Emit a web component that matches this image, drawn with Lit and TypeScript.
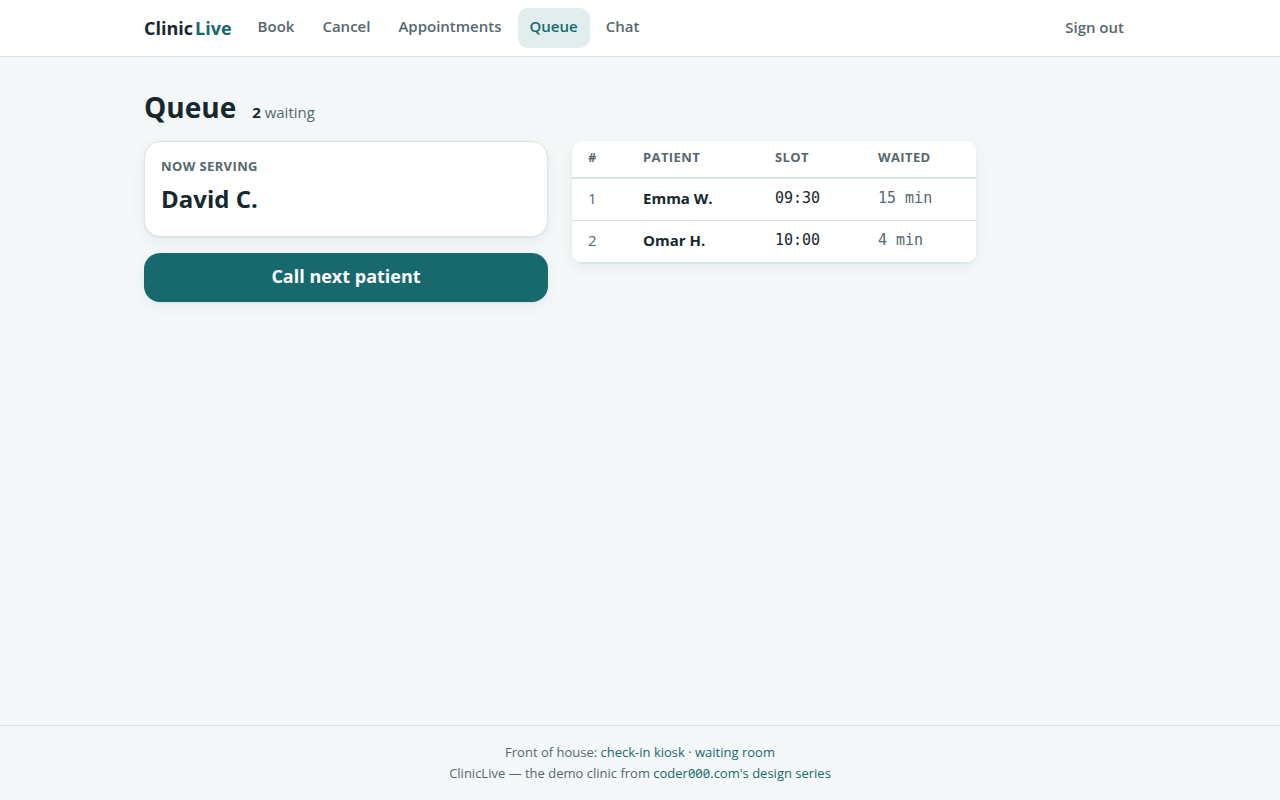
import { LitElement, html, css } from "lit";
import { customElement, property, state } from "lit/decorators.js";
import { classMap } from "lit/directives/class-map.js";

interface Waiting {
  name: string;
  slot: string;
  waited: number;
}

@customElement("clinic-header")
class ClinicHeader extends LitElement {
  @property() current = "";

  static styles = css`
    :host {
      display: block;
      background: #ffffff;
      border-bottom: 1px solid #d8e3e3;
    }
    .bar {
      box-sizing: border-box;
      max-width: 1024px;
      min-height: 56px;
      margin: 0 auto;
      padding: 0 16px;
      display: flex;
      align-items: center;
      gap: 14px;
    }
    .brand {
      display: flex;
      gap: 2px;
      color: #16282d;
      font-size: 18px;
      font-weight: 700;
      line-height: 24px;
      text-decoration: none;
    }
    .accent {
      color: #17696e;
    }
    .links {
      flex: 1;
      display: flex;
      gap: 4px;
    }
    .link,
    .signout {
      box-sizing: border-box;
      border: 0;
      border-radius: 10px;
      background: none;
      color: #56686d;
      font-family: inherit;
      font-size: 15px;
      font-weight: 600;
      line-height: 24px;
      text-decoration: none;
      padding: 6px 12px 10px;
      cursor: pointer;
    }
    .signout {
      padding: 7px 12px 9px;
    }
    .active {
      background: #e1eeed;
      color: #17696e;
    }
  `;

  render() {
    const links = ["Book", "Cancel", "Appointments", "Queue", "Chat"];
    return html`
      <header class="bar">
        <a class="brand" href="#home"><span>Clinic</span><span class="accent">Live</span></a>
        <nav class="links">
          ${links.map(
            (l) => html`<a
              class=${classMap({ link: true, active: l === this.current })}
              href="#${l.toLowerCase()}"
              >${l}</a
            >`
          )}
        </nav>
        <button class="signout" type="button">Sign out</button>
      </header>
    `;
  }
}

@customElement("queue-table")
class QueueTable extends LitElement {
  @property({ attribute: false }) rows: Waiting[] = [];

  static styles = css`
    :host {
      display: block;
    }
    .table {
      width: 100%;
      table-layout: fixed;
      border-collapse: separate;
      border-spacing: 0;
      background: #ffffff;
      border-radius: 10px;
      overflow: hidden;
      box-shadow: 0 1px 2px rgba(22, 40, 45, 0.06), 0 4px 16px rgba(22, 40, 45, 0.06);
    }
    .head {
      padding: 6px 16px 10px;
      border-bottom: 2px solid #d8e5e3;
      color: #56686d;
      font-size: 13px;
      font-weight: 700;
      line-height: 20px;
      letter-spacing: 0.03em;
      text-align: left;
      text-transform: uppercase;
    }
    .num {
      width: 23px;
    }
    .patient {
      width: 100px;
    }
    .slot {
      width: 71px;
    }
    .cell {
      padding: 7px 16px 10px;
      border-bottom: 1px solid #d8e5e3;
      font-size: 15px;
      line-height: 24px;
      vertical-align: top;
    }
    .name {
      font-weight: 700;
    }
    .muted {
      color: #56686d;
    }
    .time {
      font-family: "DejaVu Sans Mono", monospace;
    }
  `;

  render() {
    return html`
      <table class="table">
        <thead>
          <tr>
            <th class="head num" scope="col">#</th>
            <th class="head patient" scope="col">Patient</th>
            <th class="head slot" scope="col">Slot</th>
            <th class="head" scope="col">Waited</th>
          </tr>
        </thead>
        <tbody>
          ${this.rows.map(
            (r, i) => html`<tr>
              <td class="cell muted">${i + 1}</td>
              <td class="cell name">${r.name}</td>
              <td class="cell time">${r.slot}</td>
              <td class="cell time muted">${r.waited} min</td>
            </tr>`
          )}
        </tbody>
      </table>
    `;
  }
}

@customElement("clinic-footer")
class ClinicFooter extends LitElement {
  static styles = css`
    :host {
      display: block;
      border-top: 1px solid #d8e3e3;
      color: #56686d;
      font-size: 13px;
      line-height: 21px;
      text-align: center;
    }
    .footer {
      padding: 16px;
    }
    .line {
      margin: 0;
    }
    .link {
      color: #17696e;
      text-decoration: none;
    }
    .zeros {
      font-variant-numeric: slashed-zero;
    }
  `;

  render() {
    return html`
      <footer class="footer">
        <p class="line">
          Front of house: <a class="link" href="#kiosk">check-in kiosk</a> ·
          <a class="link" href="#waiting-room">waiting room</a>
        </p>
        <p class="line">
          ClinicLive — the demo clinic from
          <a class="link zeros" href="#series">coder000.com's design series</a>
        </p>
      </footer>
    `;
  }
}

@customElement("app-root")
class AppRoot extends LitElement {
  @state() private serving = "David C.";
  @state() private queue: Waiting[] = [
    { name: "Emma W.", slot: "09:30", waited: 15 },
    { name: "Omar H.", slot: "10:00", waited: 4 },
  ];

  static styles = css`
    :host {
      display: flex;
      flex-direction: column;
      min-height: 100vh;
      background: #f4f8f9;
      color: #16282d;
      font-family: "Open Sans", "Noto Sans", sans-serif;
      font-size: 15px;
      line-height: 24px;
    }
    .main {
      flex: 1;
      box-sizing: border-box;
      width: 100%;
      max-width: 1024px;
      margin: 0 auto;
      padding: 32px 16px;
    }
    .heading {
      display: flex;
      align-items: baseline;
      gap: 16px;
      margin-bottom: 16px;
    }
    .title {
      margin: 0;
      font-size: 28px;
      font-weight: 700;
      line-height: 36px;
    }
    .count {
      margin: 0;
      color: #56686d;
    }
    .strong {
      color: #16282d;
      font-weight: 700;
    }
    .columns {
      display: grid;
      grid-template-columns: repeat(auto-fit, minmax(320px, 1fr));
      align-items: start;
      gap: 24px;
      max-width: 832px;
    }
    .side {
      display: grid;
      gap: 16px;
    }
    .card {
      padding: 14px 16px 18px;
      background: #ffffff;
      border: 1px solid #d8e5e3;
      border-radius: 16px;
      box-shadow: 0 1px 2px rgba(22, 40, 45, 0.06), 0 4px 16px rgba(22, 40, 45, 0.06);
    }
    .label {
      margin: 0 0 4px;
      color: #56686d;
      font-size: 13px;
      font-weight: 700;
      line-height: 20px;
      letter-spacing: 0.03em;
      text-transform: uppercase;
    }
    .patient {
      margin: 0;
      font-size: 24px;
      font-weight: 700;
      line-height: 38px;
    }
    .call {
      min-height: 49px;
      padding: 11px 16px 14px;
      border: 0;
      border-radius: 16px;
      background: #17696e;
      color: #ffffff;
      font-family: inherit;
      font-size: 18px;
      font-weight: 700;
      line-height: 24px;
      box-shadow: 0 1px 2px rgba(22, 40, 45, 0.06), 0 4px 16px rgba(22, 40, 45, 0.06);
      cursor: pointer;
    }
  `;

  private callNext() {
    const [next, ...rest] = this.queue;
    if (!next) return;
    this.serving = next.name;
    this.queue = rest;
  }

  render() {
    return html`
      <clinic-header current="Queue"></clinic-header>
      <main class="main">
        <div class="heading">
          <h1 class="title">Queue</h1>
          <p class="count"><span class="strong">${this.queue.length}</span> waiting</p>
        </div>
        <div class="columns">
          <div class="side">
            <section class="card">
              <h2 class="label">Now serving</h2>
              <p class="patient">${this.serving}</p>
            </section>
            <button class="call" type="button" @click=${this.callNext}>Call next patient</button>
          </div>
          <queue-table .rows=${this.queue}></queue-table>
        </div>
      </main>
      <clinic-footer></clinic-footer>
    `;
  }
}
